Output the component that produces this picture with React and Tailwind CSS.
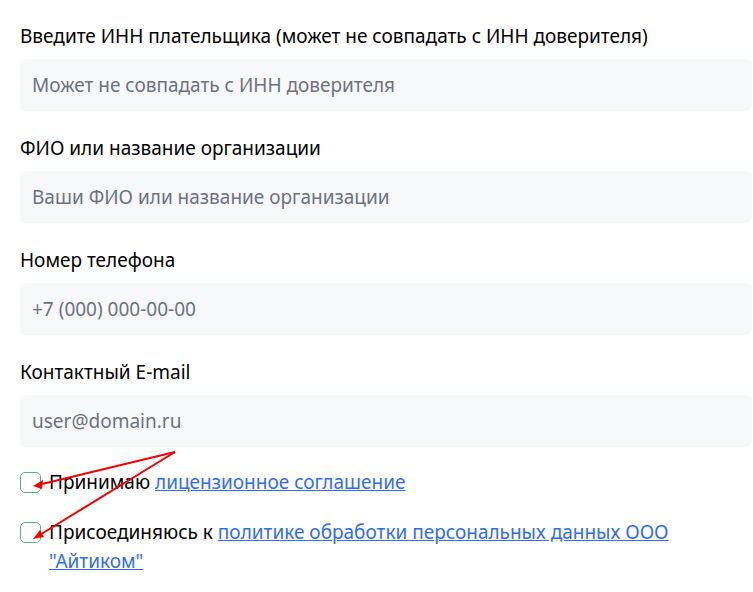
import React from 'react';

const fields = [
    { label: "Введите ИНН плательщика (может не совпадать с ИНН доверителя)", placeholder: "Может не совпадать с ИНН доверителя" },
    { label: "ФИО или название организации", placeholder: "Ваши ФИО или название организации" },
    { label: "Номер телефона", placeholder: "+7 (000) 000-00-00" },
    { label: "Контактный E-mail", placeholder: "user@domain.ru" },
];

const App = () => {
    return (
        <div className="relative bg-white min-h-[592px] pl-5 pr-px pt-[22px]" style={{ fontFamily: '"Noto Sans", "Open Sans", sans-serif' }}>
            <div className="flex flex-col gap-[23px]">
                {fields.map(f => (
                    <div key={f.label} className="flex flex-col">
                        <label className="text-[19px] leading-[28px] text-black mb-[9px]">{f.label}</label>
                        <input
                            placeholder={f.placeholder}
                            className="h-[52px] w-full rounded-md bg-[#f7f8fa] px-3 text-[19px] text-gray-700 placeholder:text-[#6b7280] outline-none"
                        />
                    </div>
                ))}
            </div>

            <div className="mt-[21px] flex flex-col gap-[21px] text-[19px] leading-[29px] text-black">
                <label className="flex items-start gap-2">
                    <span className="mt-[4px] h-[21px] w-[21px] flex-shrink-0 rounded-[5px] border border-[#5cb37a] bg-white"></span>
                    <span>Принимаю <a href="#" className="text-[#2f6cf5] underline">лицензионное соглашение</a></span>
                </label>
                <label className="flex items-start gap-2">
                    <span className="mt-[4px] h-[21px] w-[21px] flex-shrink-0 rounded-[5px] border border-[#5cb37a] bg-white"></span>
                    <span className="max-w-[640px]">Присоединяюсь к <a href="#" className="text-[#2f6cf5] underline">политике обработки персональных данных ООО "Айтиком"</a></span>
                </label>
            </div>

            {/* annotation arrows */}
            <svg className="absolute left-0 top-0 pointer-events-none" width="753" height="592">
                <g stroke="#f00000" strokeWidth="2" fill="none">
                    <line x1="175" y1="452" x2="38" y2="485" />
                    <line x1="175" y1="452" x2="38" y2="536" />
                </g>
                <polygon points="33,486 43,480 42,489" fill="#f00000" />
                <polygon points="33,539 40,530 44,537" fill="#f00000" />
            </svg>
        </div>
    );
};

export default App;
